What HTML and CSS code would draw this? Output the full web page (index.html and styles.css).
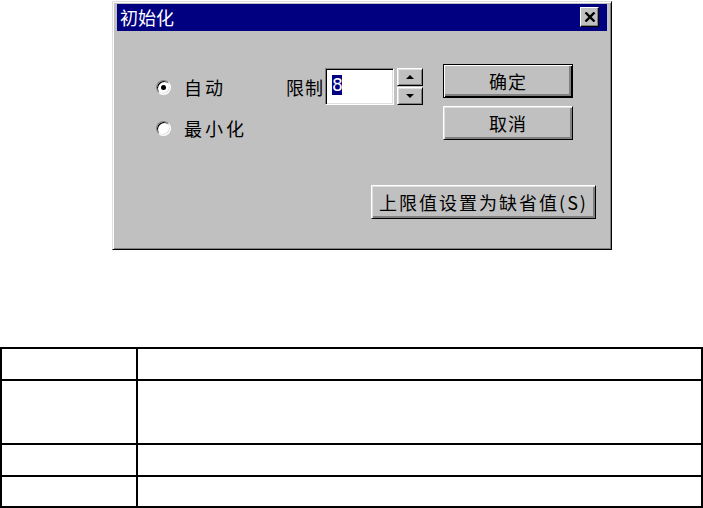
FILE: index.html
```html
<!DOCTYPE html>
<html lang="zh-CN">
<head>
    <meta charset="UTF-8">
    <title>初始化</title>
    <link rel="stylesheet" href="styles.css">
</head>
<body>
    <div class="dialog">
        <div class="titlebar">
            <span class="title">初始化</span>
            <div class="close">
                <svg width="12" height="10" viewBox="0 0 12 10">
                    <path d="M1.5 0.5 L10.5 9.5 M10.5 0.5 L1.5 9.5" stroke="#000" stroke-width="2.4" fill="none"/>
                </svg>
            </div>
        </div>
        <div class="dialog-body">
            <div class="main-row">
                <div class="options">
                    <div class="radio-item"><span class="radio checked"></span>自动</div>
                    <div class="radio-item"><span class="radio"></span>最小化</div>
                </div>
                <div class="limit">
                    <span class="limit-label">限制</span>
                    <div class="field"><span class="sel">8</span></div>
                    <div class="spinner">
                        <div class="spin-btn"><span class="tri-up"></span></div>
                        <div class="spin-btn"><span class="tri-down"></span></div>
                    </div>
                </div>
                <div class="actions">
                    <div class="btn default">确定</div>
                    <div class="btn">取消</div>
                </div>
            </div>
            <div class="footer-row">
                <div class="btn wide">上限值设置为缺省值(S)</div>
            </div>
        </div>
    </div>

    <table class="grid">
        <tr><td class="col-key"></td><td></td></tr>
        <tr class="tall"><td class="col-key"></td><td></td></tr>
        <tr><td class="col-key"></td><td></td></tr>
        <tr class="last"><td class="col-key"></td><td></td></tr>
    </table>
</body>
</html>
```

FILE: styles.css
```css
body {
    margin: 0;
    padding: 0;
    background-color: #fff;
    font-family: "Noto Sans CJK SC", sans-serif;
    color: #000;
}

/* Dialog window */
.dialog {
    box-sizing: border-box;
    width: 500px;
    height: 249px;
    margin: 1px 0 0 112px;
    padding: 2px 4px 4px 4px;
    background-color: #c0c0c0;
    border: 1px solid;
    border-color: #dfdfdf #000 #000 #dfdfdf;
    box-shadow: inset 1px 1px #fff, inset -1px -1px #808080;
}
.titlebar {
    display: flex;
    align-items: flex-start;
    justify-content: space-between;
    height: 27px;
    background-color: #000080;
}
.title {
    color: #fff;
    font-size: 18px;
    line-height: 27px;
    padding-left: 3px;
}
.close {
    box-sizing: border-box;
    width: 19px;
    height: 20px;
    margin: 3px 8px 0 0;
    display: flex;
    align-items: center;
    justify-content: center;
    background-color: #c0c0c0;
    border: 1px solid;
    border-color: #fff #000 #000 #fff;
    box-shadow: inset -1px -1px #808080;
}

.dialog-body {
    padding: 33px 11px 0 40px;
}
.main-row {
    display: flex;
    align-items: flex-start;
}

/* Radio buttons */
.options {
    width: 129px;
    margin-top: 6px;
    display: flex;
    flex-direction: column;
    gap: 7px;
}
.radio-item {
    display: flex;
    align-items: center;
    height: 34px;
    font-size: 18px;
    letter-spacing: 3px;
}
.radio {
    box-sizing: border-box;
    width: 15px;
    height: 15px;
    margin-left: -1px;
    margin-right: 13px;
    border-radius: 50%;
    border: 1px solid;
    border-color: #808080 #fff #fff #808080;
    background-color: #fff;
    box-shadow: inset 1px 1px #000, inset -1px -1px #dfdfdf;
    position: relative;
}
.radio.checked::after {
    content: "";
    position: absolute;
    left: 4px;
    top: 4px;
    width: 5px;
    height: 5px;
    border-radius: 50%;
    background-color: #000;
}

/* Limit spinner */
.limit {
    display: flex;
    align-items: center;
    margin-top: 4px;
    height: 37px;
}
.limit-label {
    font-size: 18px;
    letter-spacing: 1px;
    margin-right: 1px;
}
.field {
    box-sizing: border-box;
    width: 69px;
    height: 37px;
    padding: 3px 0 0 6px;
    background-color: #fff;
    border: 1px solid;
    border-color: #808080 #fff #fff #808080;
    box-shadow: inset 1px 1px #000, inset -1px -1px #dfdfdf;
}
.sel {
    display: inline-block;
    width: 10px;
    height: 20px;
    line-height: 20px;
    text-align: center;
    font-family: "DejaVu Sans", sans-serif;
    font-size: 17px;
    background-color: #000080;
    color: #fff;
}
.spinner {
    display: flex;
    flex-direction: column;
    gap: 1px;
    margin-left: 3px;
}
.spin-btn {
    box-sizing: border-box;
    width: 26px;
    height: 18px;
    display: flex;
    align-items: center;
    justify-content: center;
    border: 1px solid;
    border-color: #fff #000 #000 #fff;
    box-shadow: inset 1px 1px #dfdfdf, inset -1px -1px #808080;
}
.tri-up {
    border-left: 4px solid transparent;
    border-right: 4px solid transparent;
    border-bottom: 4px solid #000;
}
.tri-down {
    border-left: 4px solid transparent;
    border-right: 4px solid transparent;
    border-top: 4px solid #000;
}

/* Push buttons */
.actions {
    display: flex;
    flex-direction: column;
    gap: 8px;
    margin-left: 20px;
}
.btn {
    box-sizing: border-box;
    width: 130px;
    height: 34px;
    display: flex;
    align-items: center;
    justify-content: center;
    font-size: 18px;
    letter-spacing: 1px;
    border: 1px solid;
    border-color: #fff #000 #000 #fff;
    box-shadow: inset 1px 1px #dfdfdf, inset -2px -2px #808080;
}
.btn.default {
    border-color: #000;
    box-shadow: inset 1px 1px #fff, inset -1px -1px #000, inset -3px -3px #808080;
}
.btn.wide {
    width: 225px;
    letter-spacing: 2px;
}
.footer-row {
    display: flex;
    justify-content: flex-end;
    margin-top: 40px;
}

/* Empty table below */
.grid {
    width: 100%;
    margin-top: 97px;
    border-collapse: separate;
    border-spacing: 0;
    border-top: 2px solid #000;
    border-left: 2px solid #000;
}
.grid td {
    padding: 0;
    height: 30px;
    border-right: 2px solid #000;
    border-bottom: 2px solid #000;
}
.grid .col-key {
    width: 134px;
}
.grid .tall td {
    height: 62px;
}
.grid .last td {
    height: 29px;
}
```
